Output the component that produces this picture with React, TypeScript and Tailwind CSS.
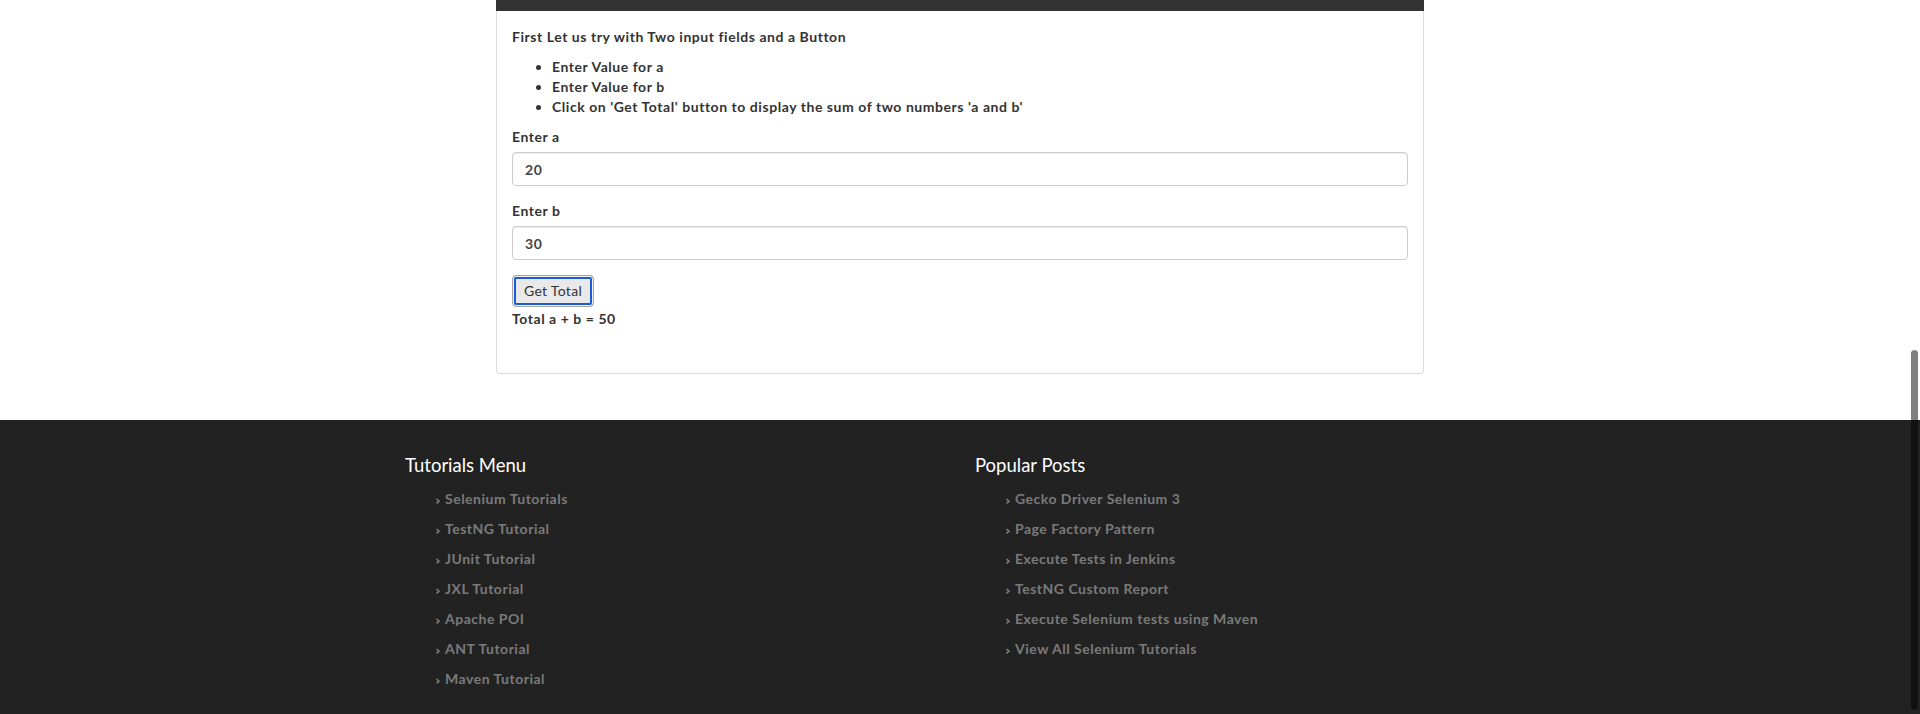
const tutorials = [
  "Selenium Tutorials",
  "TestNG Tutorial",
  "JUnit Tutorial",
  "JXL Tutorial",
  "Apache POI",
  "ANT Tutorial",
  "Maven Tutorial",
];

const posts = [
  "Gecko Driver Selenium 3",
  "Page Factory Pattern",
  "Execute Tests in Jenkins",
  "TestNG Custom Report",
  "Execute Selenium tests using Maven",
  "View All Selenium Tutorials",
];

function Chevron() {
  return (
    <svg width="10" height="8" viewBox="0 0 10 8" className="shrink-0 mt-[3px]">
      <polyline points="1.5,2 4,4.2 1.5,6.4" fill="none" stroke="#7a7a7a" strokeWidth="1.6" />
    </svg>
  );
}

function FooterColumn({ title, items }: { title: string; items: string[] }) {
  return (
    <div className="px-[15px]">
      <h3 className="text-[18.5px] leading-[22px] text-white font-normal">{title}</h3>
      <ul className="mt-[8px] pl-[30px]">
        {items.map((item) => (
          <li key={item} className="flex items-center h-[30px]">
            <Chevron />
            <a href="#" className="text-[14px] font-bold tracking-[0.5px] text-[#7a7a7a]">{item}</a>
          </li>
        ))}
      </ul>
    </div>
  );
}

export default function App() {
  return (
    <div className="w-full min-h-[714px] bg-white text-[#333] font-['Lato',sans-serif] text-[14px] leading-[20px]">
      {/* Panel */}
      <div className="h-[420px]">
        <div className="mx-auto w-[928px] border-x border-b border-[#ddd] rounded-b-[4px]">
          <div className="h-[11px] bg-[#333] -mx-px" />
          <div className="px-[15px] pt-[16px] pb-[44px] font-bold tracking-[0.55px]">
            <p className="mb-[10px]">First Let us try with Two input fields and a Button</p>
            <ul className="list-disc pl-[40px] mb-[10px]">
              <li>Enter Value for a</li>
              <li>Enter Value for b</li>
              <li>Click on 'Get Total' button to display the sum of two numbers 'a and b'</li>
            </ul>
            <div className="mb-[15px]">
              <label className="block mb-[5px]">Enter a</label>
              <input
                defaultValue="20"
                className="block w-full h-[34px] px-[12px] border border-[#ccc] rounded-[4px] font-bold text-[#444] shadow-[inset_0_1px_1px_rgba(0,0,0,0.075)] outline-none"
              />
            </div>
            <div className="mb-[15px]">
              <label className="block mb-[5px]">Enter b</label>
              <input
                defaultValue="30"
                className="block w-full h-[34px] px-[12px] border border-[#ccc] rounded-[4px] font-bold text-[#444] shadow-[inset_0_1px_1px_rgba(0,0,0,0.075)] outline-none"
              />
            </div>
            <button className="block h-[32px] w-[82px] rounded-[4px] border border-[#a5a5a5] bg-[#e9e9e9] text-[#333] text-[14px] font-normal tracking-[0.3px] shadow-[inset_0_0_0_1px_#f2f2f2,inset_0_0_0_3px_#1b5cd6]">
              Get Total
            </button>
            <div className="mt-[2px]">Total a + b = 50</div>
          </div>
        </div>
      </div>

      {/* Footer */}
      <footer className="h-[294px] bg-[#222] pt-[34px]">
        <div className="mx-auto w-[1140px] grid grid-cols-2">
          <FooterColumn title="Tutorials Menu" items={tutorials} />
          <FooterColumn title="Popular Posts" items={posts} />
        </div>
      </footer>

      {/* overlay scrollbar thumb */}
      <div className="fixed right-[2px] top-[350px] w-[7px] h-[360px] rounded-full bg-black/50" />
    </div>
  );
}
